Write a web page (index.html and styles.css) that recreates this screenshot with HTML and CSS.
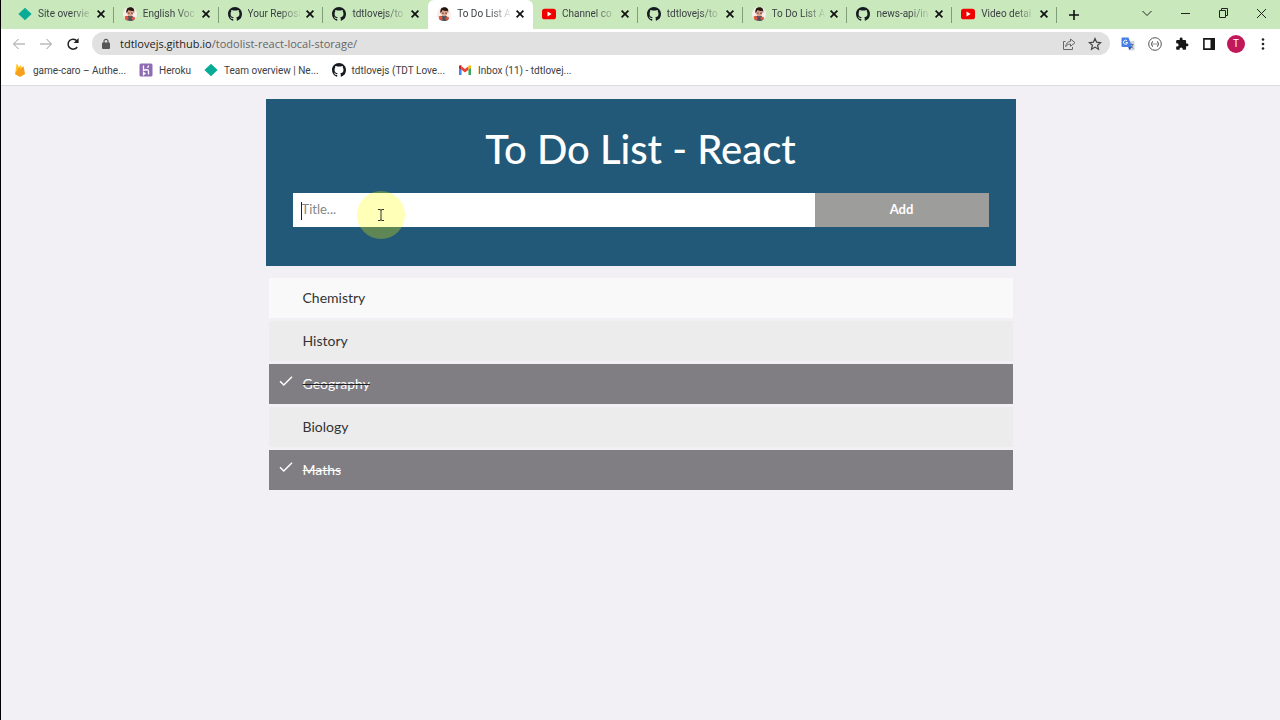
FILE: index.html
```html
<!DOCTYPE html>
<html lang="en">
<head>
    <meta charset="UTF-8">
    <meta name="viewport" content="width=device-width, initial-scale=1.0">
    <title>To Do List App</title>
    <link rel="stylesheet" href="styles.css">
</head>
<body>
    <!-- shared icons -->
    <svg class="sprite" aria-hidden="true">
        <symbol id="diamond" viewBox="0 0 16 16"><path d="M8 .8 15.6 8 8 15.2.4 8z" fill="#08ab96"/></symbol>
        <symbol id="github" viewBox="0 0 16 16"><path fill="#171b20" d="M8 0C3.58 0 0 3.58 0 8c0 3.54 2.29 6.53 5.47 7.59.4.07.55-.17.55-.38 0-.19-.01-.82-.01-1.49-2.01.37-2.53-.49-2.69-.94-.09-.23-.48-.94-.82-1.13-.28-.15-.68-.52-.01-.53.63-.01 1.08.58 1.23.82.72 1.21 1.87.87 2.33.66.07-.52.28-.87.51-1.07-1.78-.2-3.64-.89-3.64-3.95 0-.87.31-1.59.82-2.15-.08-.2-.36-1.02.08-2.12 0 0 .67-.21 2.2.82.64-.18 1.32-.27 2-.27s1.36.09 2 .27c1.53-1.04 2.2-.82 2.2-.82.44 1.1.16 1.92.08 2.12.51.56.82 1.27.82 2.15 0 3.07-1.87 3.75-3.65 3.95.29.25.54.73.54 1.48 0 1.07-.01 1.93-.01 2.2 0 .21.15.46.55.38A8.01 8.01 0 0 0 16 8c0-4.42-3.58-8-8-8z"/></symbol>
        <symbol id="youtube" viewBox="0 0 16 16"><rect y="2" width="16" height="12" rx="3" fill="#f10000"/><path d="M6.3 5.2 11 8l-4.7 2.8z" fill="#fff"/></symbol>
        <symbol id="person" viewBox="0 0 16 16"><circle cx="8" cy="8" r="8" fill="#fbeeea"/><path d="M2.800 14.400c.5-3.200 2.400-4.600 5.200-4.600s4.800 1.400 5.200 4.400C11.800 15.500 10 16 8 16s-3.800-.5-5.200-1.600z" fill="#4a5259"/><path d="M1.800 10.800l2.400-.8 2.300 2.300-1 2.700-2.700-.7zM9 12.200l4-1.200 1 2.200-3 1.800z" fill="#e5533f"/><ellipse cx="8.300" cy="6.600" rx="3.400" ry="4" fill="#e0a089"/><path d="M4 7C3.200 2.600 5 .2 8.600.2c3.400 0 5 2.600 4 6.800l-.8-2.600c-2.200.2-4-.2-5.600-1-.4 1.400-1.200 2.400-2.200 3.600z" fill="#24150f"/><path d="M5.400 6.500h2.200v.8H5.400zM9.200 6.500h2.200v.8H9.200z" fill="#302625"/></symbol>
        <symbol id="cross" viewBox="0 0 10 10"><path d="M1.600 1.600l6.800 6.800M8.400 1.600 1.600 8.400" stroke="#111" stroke-width="1.700"/></symbol>
        <symbol id="tick" viewBox="0 0 14 12"><path d="M1 6.200 4.800 10 13 1.800" fill="none" stroke="#fff" stroke-width="1.500"/></symbol>
    </svg>

    <header class="browser">
        <div class="tab-strip">
            <div class="tabs">
                <div class="tab"><svg class="favicon"><use href="#diamond"/></svg><span class="tab-title">Site overvie</span><button class="tab-close" aria-label="Close tab"><svg><use href="#cross"/></svg></button></div>
                <div class="tab"><svg class="favicon"><use href="#person"/></svg><span class="tab-title">English Voc</span><button class="tab-close" aria-label="Close tab"><svg><use href="#cross"/></svg></button></div>
                <div class="tab"><svg class="favicon"><use href="#github"/></svg><span class="tab-title">Your Reposi</span><button class="tab-close" aria-label="Close tab"><svg><use href="#cross"/></svg></button></div>
                <div class="tab before-active"><svg class="favicon"><use href="#github"/></svg><span class="tab-title">tdtlovejs/to</span><button class="tab-close" aria-label="Close tab"><svg><use href="#cross"/></svg></button></div>
                <div class="tab active"><svg class="favicon"><use href="#person"/></svg><span class="tab-title">To Do List A</span><button class="tab-close" aria-label="Close tab"><svg><use href="#cross"/></svg></button></div>
                <div class="tab"><svg class="favicon"><use href="#youtube"/></svg><span class="tab-title">Channel co</span><button class="tab-close" aria-label="Close tab"><svg><use href="#cross"/></svg></button></div>
                <div class="tab"><svg class="favicon"><use href="#github"/></svg><span class="tab-title">tdtlovejs/to</span><button class="tab-close" aria-label="Close tab"><svg><use href="#cross"/></svg></button></div>
                <div class="tab"><svg class="favicon"><use href="#person"/></svg><span class="tab-title">To Do List A</span><button class="tab-close" aria-label="Close tab"><svg><use href="#cross"/></svg></button></div>
                <div class="tab"><svg class="favicon"><use href="#github"/></svg><span class="tab-title">news-api/in</span><button class="tab-close" aria-label="Close tab"><svg><use href="#cross"/></svg></button></div>
                <div class="tab"><svg class="favicon"><use href="#youtube"/></svg><span class="tab-title">Video detai</span><button class="tab-close" aria-label="Close tab"><svg><use href="#cross"/></svg></button></div>
            </div>
            <button class="new-tab" aria-label="New tab"><svg viewBox="0 0 12 12"><path d="M6 1v10M1 6h10" stroke="#111" stroke-width="1.600"/></svg></button>
            <div class="window-buttons">
                <button aria-label="Search tabs"><svg viewBox="0 0 12 12"><path d="M1.500 4 6 8.500 10.500 4" fill="none" stroke="#222"/></svg></button>
                <button aria-label="Minimize"><svg viewBox="0 0 12 12"><path d="M2 6.500h9" stroke="#222"/></svg></button>
                <button aria-label="Restore"><svg viewBox="0 0 12 12"><path d="M2.500 3.500h6v7h-6zM4.500 3.500v-2h6v7h-2" fill="none" stroke="#222"/></svg></button>
                <button aria-label="Close"><svg viewBox="0 0 12 12"><path d="M2 2l9 9M11 2l-9 9" stroke="#222"/></svg></button>
            </div>
        </div>

        <div class="toolbar">
            <div class="nav-buttons">
                <button aria-label="Back"><svg viewBox="0 0 14 14"><path d="M13 7H2M6.500 2 1.500 7l5 5" fill="none" stroke="#999"/></svg></button>
                <button aria-label="Forward"><svg viewBox="0 0 14 14"><path d="M1 7h11M7.500 2l5 5-5 5" fill="none" stroke="#999"/></svg></button>
                <button aria-label="Reload"><svg viewBox="0 0 14 14"><path d="M11.200 10A5 5 0 1 1 11 4" fill="none" stroke="#222" stroke-width="1.500"/><path d="M12.600 1v5H7.600z" fill="#222"/></svg></button>
            </div>
            <div class="address">
                <svg class="lock" viewBox="0 0 10 12"><rect x="1" y="4.500" width="8" height="6.500" rx="1" fill="#555"/><path d="M3 5V3.300a2 2 0 0 1 4 0V5" fill="none" stroke="#555" stroke-width="1.200"/></svg>
                <span class="url"><span class="host">tdtlovejs.github.io</span>/todolist-react-local-storage/</span>
                <button aria-label="Share"><svg viewBox="0 0 14 14"><path d="M3.500 4.500h-2v8h9V10" fill="none" stroke="#666"/><path d="M8.500 2l4.500 3.700-4.500 3.600V7.100C6 7 4.800 8 3.700 9.700 4 6.500 5.600 4.700 8.500 4.300z" fill="none" stroke="#666"/></svg></button>
                <button aria-label="Bookmark"><svg viewBox="0 0 14 14"><path d="M7 1.500l1.600 3.700 4 .4-3 2.700.9 3.900L7 10.100l-3.500 2.100.9-3.900-3-2.700 4-.4z" fill="none" stroke="#444" stroke-width="1.200"/></svg></button>
            </div>
            <div class="extensions">
                <button aria-label="Translate"><svg viewBox="0 0 14 14"><path d="M5 4h8.500v9.500H8z" fill="#d3d7dc"/><path d="M8.500 7.500h4M10.500 6.500v1M12 7.500c-.5 1.800-1.500 3-3 4M9.200 8.500l3 3" fill="none" stroke="#647694"/><path d="M1 .5h6.500L11 10H1.500a1 1 0 0 1-1-1V1z" fill="#477fe5"/><path d="M7.300 10h3.500l-2.300 3z" fill="#2756bc"/><path d="M6 3.900A2 2 0 1 0 6.500 5.500H4.700" fill="none" stroke="#fff"/></svg></button>
                <button aria-label="JSON viewer"><svg viewBox="0 0 14 14"><circle cx="7" cy="7" r="6.300" fill="none" stroke="#444" stroke-width=".9"/><path d="M4.800 4.500c-1.500 0 0 2.500-1.500 2.500 1.500 0 0 2.500 1.500 2.500M9.200 4.500c1.500 0 0 2.500 1.500 2.500-1.500 0 0 2.500-1.500 2.500M5.500 7h1M7.500 7h1" fill="none" stroke="#333"/></svg></button>
                <button aria-label="Extensions"><svg viewBox="0 0 24 24"><path fill="#171717" d="M20.500 11H19V7c0-1.100-.9-2-2-2h-4V3.500a2.500 2.500 0 0 0-5 0V5H4c-1.100 0-2 .9-2 2v3.800h1.500a2.700 2.700 0 0 1 0 5.400H2V20c0 1.100.9 2 2 2h3.800v-1.500a2.700 2.700 0 0 1 5.400 0V22H17c1.100 0 2-.9 2-2v-4h1.500a2.500 2.500 0 0 0 0-5z"/></svg></button>
                <button aria-label="Side panel"><svg viewBox="0 0 14 14"><path d="M1.900 1.900h10.200v10.200H1.900z" fill="none" stroke="#171717" stroke-width="1.600"/><path d="M8.500 1.500H13v11H8.500z" fill="#171717"/></svg></button>
                <button class="profile" aria-label="Profile">T</button>
                <button aria-label="Menu"><svg viewBox="0 0 14 14" fill="#222"><circle cx="7" cy="2.500" r="1.300"/><circle cx="7" cy="7" r="1.300"/><circle cx="7" cy="11.500" r="1.300"/></svg></button>
            </div>
        </div>

        <nav class="bookmarks">
            <a href="#"><svg viewBox="0 0 14 14"><path d="M2 11 3.500 1.200c.1-.4.500-.5.700-.1L6 4.200l1-1.700c.2-.3.500-.3.700 0L12 11l-4.600 2.600a1 1 0 0 1-1 0z" fill="#ffc629"/><path d="M2 11 6 4.200l1.700 3zM2 11l8-7.400c.2-.2.600-.1.700.2L12 11l-4.600 2.600a1 1 0 0 1-1 0z" fill="#f7a01d"/></svg><span>game-caro – Authe...</span></a>
            <a href="#"><svg viewBox="0 0 14 14"><rect x=".5" y=".5" width="13" height="13" rx="1.500" fill="#8e6cb4"/><path d="M4.500 2.500v5c2-1 5-1.200 5 .7v3.300M9.500 2.500c0 1-.4 1.700-1 2.300M4.500 9.500v2.200L6 10.600z" fill="none" stroke="#fff" stroke-width="1.300"/></svg><span>Heroku</span></a>
            <a href="#"><svg><use href="#diamond"/></svg><span>Team overview | Ne...</span></a>
            <a href="#"><svg><use href="#github"/></svg><span>tdtlovejs (TDT Love...</span></a>
            <a href="#"><svg viewBox="0 0 14 14"><path d="M1 3.500V12h2.500V6z" fill="#4285f4"/><path d="M13 3.500V12h-2.500V6z" fill="#34a853"/><path d="M3.500 3.300 7 6l3.500-2.700v3.500L7 9.500 3.500 6.800z" fill="#ea4335"/><path d="M1 3.500c0-1.300 1.400-1.800 2.500-.9v4.200L1 5z" fill="#c5221f"/><path d="M13 3.500c0-1.300-1.400-1.800-2.500-.9v4.200L13 5z" fill="#fbbc04"/></svg><span>Inbox (11) - tdtlovej...</span></a>
        </nav>
    </header>

    <main class="container">
        <section class="header">
            <h1>To Do List - React</h1>
            <form class="todo-form">
                <input type="text" class="todo-input" placeholder="Title..." aria-label="Title">
                <button type="button" class="add-btn">Add</button>
                <span class="caret"></span>
                <span class="pointer"><svg viewBox="0 0 8 14"><path d="M1 1.500h2l1 .7 1-.7h2M4 2v10M1 12.500h2l1-.7 1 .7h2" fill="none" stroke="#333"/></svg></span>
            </form>
        </section>
        <ul class="todo-list">
            <li class="hover"><span>Chemistry</span></li>
            <li><span>History</span></li>
            <li class="checked leaving"><svg><use href="#tick"/></svg><span>Geography</span></li>
            <li><span>Biology</span></li>
            <li class="checked"><svg><use href="#tick"/></svg><span>Maths</span></li>
        </ul>
    </main>
</body>
</html>
```
FILE: styles.css
```css
* {
    box-sizing: border-box;
}
body {
    margin: 0;
    min-height: 100vh;
    border-left: 1px solid #000;
    background-color: #f2f0f4;
    font-family: Lato, sans-serif;
}
button {
    border: 0;
    padding: 0;
    background: none;
    font-family: inherit;
    cursor: pointer;
}
svg {
    display: block;
    flex: none;
}
.sprite {
    position: absolute;
    width: 0;
    height: 0;
}

/* browser bar */
.browser {
    background: #fff;
    border-bottom: 1px solid #dcdbde;
    font-family: Roboto, sans-serif;
    font-size: 10px;
    color: #3c4043;
}
.tab-strip {
    display: flex;
    align-items: center;
    height: 29px;
    padding-left: 8px;
    background: #c9e9bd;
}
.tabs {
    display: flex;
    flex: 0 1 1048px;
    align-self: stretch;
    min-width: 0;
}
.tab {
    display: flex;
    align-items: center;
    flex: 1 1 0;
    min-width: 0;
    padding: 0 8px 2px 9px;
    background: linear-gradient(#7f9e78, #7f9e78) right center / 1px 16px no-repeat;
}
.tab.before-active {
    background: none;
}
.tab.active {
    background: #fff;
    border-radius: 6px 6px 0 0;
}
.favicon {
    width: 14px;
    height: 14px;
    margin-right: 6px;
}
.tab-title {
    flex: 1;
    overflow: hidden;
    white-space: nowrap;
    -webkit-mask-image: linear-gradient(to right, #000 60%, transparent);
    mask-image: linear-gradient(to right, #000 60%, transparent);
}
.tab-close {
    margin-left: 3px;
}
.tab-close svg {
    width: 10px;
    height: 10px;
}
.new-tab {
    margin-left: 11px;
}
.new-tab svg,
.window-buttons svg {
    width: 12px;
    height: 12px;
}
.window-buttons {
    display: flex;
    gap: 26px;
    margin-left: auto;
    padding: 0 13px 4px 0;
}
.toolbar {
    display: flex;
    align-items: center;
    height: 29px;
    padding: 0 10px 0 11px;
}
.toolbar svg {
    width: 14px;
    height: 14px;
}
.nav-buttons {
    display: flex;
    gap: 13px;
    margin-right: 12px;
}
.address {
    display: flex;
    flex: 1;
    align-items: center;
    gap: 12px;
    height: 23px;
    padding: 0 8px 0 9px;
    border-radius: 12px;
    background: #e1e1e1;
}
.address .lock {
    width: 10px;
    height: 12px;
}
.url {
    flex: 1;
    margin-left: -3px;
    font-family: "Open Sans", sans-serif;
    font-size: 11px;
    color: #666;
    white-space: nowrap;
}
.host {
    color: #222;
}
.extensions {
    display: flex;
    align-items: center;
    gap: 13px;
    margin-left: 11px;
}
.profile {
    width: 18px;
    height: 18px;
    margin: 0 -2px;
    border-radius: 50%;
    background: #c2185b;
    color: #fff;
    font-size: 10px;
}
.bookmarks {
    display: flex;
    align-items: center;
    gap: 13px;
    height: 27px;
    padding: 0 12px 3px;
}
.bookmarks a {
    display: flex;
    align-items: center;
    gap: 6px;
    color: #3c4043;
    text-decoration: none;
    white-space: nowrap;
}
.bookmarks svg {
    width: 14px;
    height: 14px;
}

/* to do app */
.container {
    max-width: 750px;
    margin: 13px auto 0;
}
.header {
    padding: 25px 27px 39px;
    background-color: #225978;
    color: #fff;
    text-align: center;
}
h1 {
    margin: 0 0 19px;
    font-size: 40px;
    line-height: 50px;
    font-weight: 500;
}
.todo-form {
    position: relative;
    display: flex;
}
.todo-input {
    width: 75%;
    height: 34px;
    padding: 0 9px 2px;
    border: 0;
    border-radius: 0;
    outline: none;
    font-family: inherit;
    font-size: 13px;
}
.todo-input::placeholder {
    color: #858585;
}
.add-btn {
    width: 25%;
    padding-bottom: 2px;
    background: #9d9d9c;
    color: #fff;
    font-size: 13px;
    font-weight: 700;
}
.caret {
    position: absolute;
    left: 8px;
    top: 9px;
    width: 1px;
    height: 18px;
    background: #222;
}
.pointer {
    position: absolute;
    left: 64px;
    top: -2px;
    display: flex;
    align-items: center;
    justify-content: center;
    width: 48px;
    height: 48px;
    border-radius: 50%;
    background: rgba(255, 255, 0, 0.28);
}
.pointer svg {
    width: 8px;
    height: 14px;
}
.todo-list {
    display: grid;
    gap: 3px;
    margin: 12px 3px 0;
    padding: 0;
    list-style: none;
}
.todo-list li {
    display: flex;
    align-items: center;
    height: 40px;
    padding: 0 0 2px 34px;
    background: #ececed;
    color: #333;
    font-size: 14px;
}
.todo-list li.hover {
    background: #f9f9f9;
}
.todo-list li.checked {
    padding-left: 10px;
    background: #807e82;
    color: #fff;
}
.todo-list li.checked span {
    text-decoration: line-through;
}
.todo-list li.leaving span {
    text-decoration-color: #222;
}
.todo-list svg {
    width: 14px;
    height: 12px;
    margin: 0 10px 4px 0;
}
```
